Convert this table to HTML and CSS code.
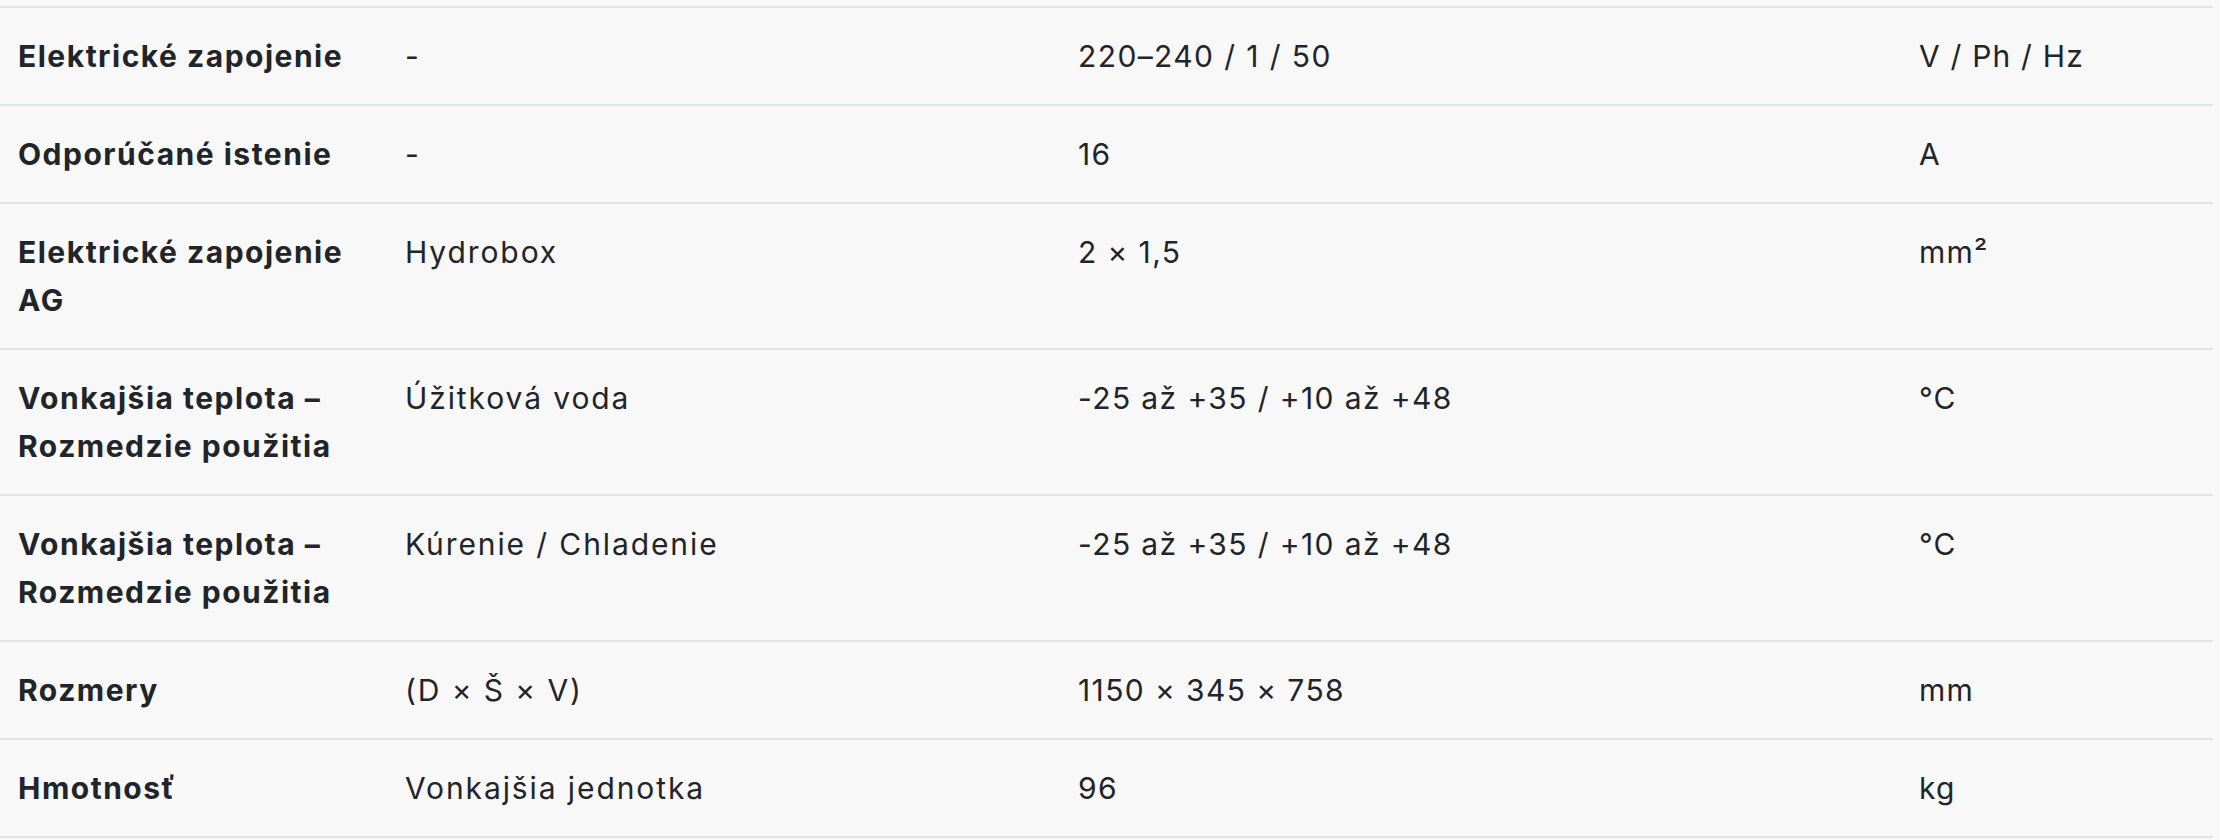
FILE: index.html
```html
<!DOCTYPE html>
<html lang="sk">
<head>
<meta charset="utf-8">
<title>Technické parametre</title>
<link rel="stylesheet" href="styles.css">
</head>
<body>
<div class="wrap">
<table class="specs">
<colgroup>
<col class="c-label"><col class="c-variant"><col class="c-value"><col class="c-unit">
</colgroup>
<tbody>
<tr><th>Elektrické zapojenie</th><td>-</td><td class="val">220–240 / 1 / 50</td><td class="unit">V / Ph / Hz</td></tr>
<tr><th>Odporúčané istenie</th><td>-</td><td class="val">16</td><td class="unit">A</td></tr>
<tr><th>Elektrické zapojenie<br>AG</th><td>Hydrobox</td><td class="val">2 × 1,5</td><td class="unit">mm²</td></tr>
<tr><th>Vonkajšia teplota –<br>Rozmedzie použitia</th><td>Úžitková voda</td><td class="val">-25 až +35 / +10 až +48</td><td class="unit">°C</td></tr>
<tr><th>Vonkajšia teplota –<br>Rozmedzie použitia</th><td>Kúrenie / Chladenie</td><td class="val">-25 až +35 / +10 až +48</td><td class="unit">°C</td></tr>
<tr><th>Rozmery</th><td>(D × Š × V)</td><td class="val">1150 × 345 × 758</td><td class="unit">mm</td></tr>
<tr><th>Hmotnosť</th><td>Vonkajšia jednotka</td><td class="val">96</td><td class="unit">kg</td></tr>
</tbody>
</table>
</div>
</body>
</html>
```
FILE: styles.css
```css
html, body {
  margin: 0;
  padding: 0;
  background: #f8f8f8;
}
.wrap {
  padding-top: 6px;
}
.specs {
  table-layout: fixed;
  width: 2213px;
  border-collapse: collapse;
  font-family: Inter, "Noto Sans", sans-serif;
  font-size: 30px;
  line-height: 48px;
  color: #212529;
}
.c-label { width: 387px; }
.c-variant { width: 673px; }
.c-value { width: 841px; }
.c-unit { width: 312px; }
.specs tr {
  border-top: 2px solid #e0e3e6;
  border-bottom: 2px solid #e0e3e6;
}
.specs th, .specs td {
  padding: 24px 18px;
  text-align: left;
  vertical-align: top;
  white-space: nowrap;
}
.specs th {
  font-weight: 700;
  letter-spacing: 1.5px;
}
.specs td {
  font-weight: 400;
  letter-spacing: 1.9px;
}
.specs td.val {
  letter-spacing: 1.4px;
}
.specs td.unit {
  letter-spacing: 1.2px;
}
```
